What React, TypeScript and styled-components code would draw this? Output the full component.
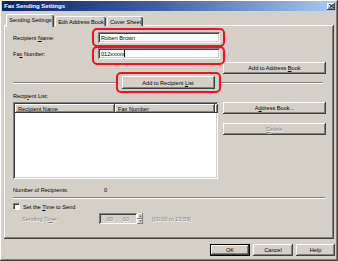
import React from "react";
import styled, { createGlobalStyle, css } from "styled-components";

const GlobalStyle = createGlobalStyle`
  html, body { margin: 0; padding: 0; background: #d4d0c8; }
  body {
    font-family: "Liberation Sans", Arial, sans-serif;
    font-size: 5.6px;
    color: #000;
  }
  * { box-sizing: border-box; }
`;

const raised = css`
  box-shadow: inset -1px -1px #404040, inset 1px 1px #fff,
    inset -2px -2px #808080, inset 2px 2px #d4d0c8;
`;

const sunken = css`
  box-shadow: inset 1px 1px #808080, inset -1px -1px #fff,
    inset 2px 2px #404040, inset -2px -2px #d4d0c8;
`;

const disabledText = css`
  color: #808080;
  text-shadow: 0.6px 0.6px #fff;
`;

const Window = styled.div`
  position: relative;
  width: 338px;
  height: 261px;
  padding: 1px 2px 2px;
  background: #d4d0c8;
  display: flex;
  flex-direction: column;
  ${raised}
`;

const TitleBar = styled.div`
  height: 10px;
  display: flex;
  align-items: center;
  justify-content: space-between;
  padding: 0 1px 0 2px;
  background: linear-gradient(to right, #0a246a 0%, #3a5fa0 45%, #a6caf0 100%);
  color: #fff;
  font-weight: bold;
  font-size: 6px;
`;

const CloseButton = styled.div`
  width: 8px;
  height: 7px;
  background: #d4d0c8;
  display: flex;
  align-items: center;
  justify-content: center;
  ${raised}
`;

const TabStrip = styled.div`
  display: flex;
  align-items: flex-end;
  height: 12px;
  margin-top: 3px;
  padding-left: 4px;
  position: relative;
  z-index: 1;
`;

const Tab = styled.div<{ $active?: boolean; $w: number }>`
  width: ${(p) => p.$w}px;
  height: ${(p) => (p.$active ? 13 : 10)}px;
  margin-bottom: ${(p) => (p.$active ? -1 : 0)}px;
  margin-right: 1px;
  display: flex;
  align-items: center;
  justify-content: center;
  padding-bottom: ${(p) => (p.$active ? 2 : 0)}px;
  background: #d4d0c8;
  border-top: 1px solid #fff;
  border-left: 1px solid #fff;
  border-radius: 2px 2px 0 0;
  box-shadow: inset -1px 0 #404040, inset -2px 0 #808080;
  white-space: nowrap;
`;

const Panel = styled.div`
  height: 214px;
  margin: -1px 2px 0;
  padding: 7px 8px 0 9px;
  display: flex;
  flex-direction: column;
  background: #d4d0c8;
  ${raised}
`;

const FieldRow = styled.div<{ $gap?: number }>`
  display: flex;
  align-items: center;
  height: 11px;
  margin-top: ${(p) => p.$gap ?? 0}px;
`;

const FieldLabel = styled.span<{ $w: number; $disabled?: boolean }>`
  width: ${(p) => p.$w}px;
  white-space: nowrap;
  ${(p) => p.$disabled && disabledText}
`;

const TextBox = styled.div`
  width: 122px;
  height: 11px;
  padding: 0 3px;
  display: flex;
  align-items: center;
  background: #fff;
  ${sunken}
`;

const Caret = styled.span`
  width: 1px;
  height: 7px;
  background: #000;
`;

const Button = styled.div<{ $w: number; $h?: number; $disabled?: boolean; $default?: boolean }>`
  width: ${(p) => p.$w}px;
  height: ${(p) => p.$h ?? 12}px;
  flex: none;
  display: flex;
  align-items: center;
  justify-content: center;
  background: #d4d0c8;
  white-space: nowrap;
  ${(p) =>
    p.$default
      ? css`
          border: 1px solid #000;
          box-shadow: inset -1px -1px #404040, inset 1px 1px #fff, inset -2px -2px #808080;
        `
      : raised}
  ${(p) => p.$disabled && disabledText}
`;

const RightRow = styled.div<{ $gap: number }>`
  display: flex;
  justify-content: flex-end;
  margin-top: ${(p) => p.$gap}px;
`;

const DividerRow = styled.div`
  display: flex;
  align-items: center;
  gap: 5px;
  height: 13px;
  margin-top: 2px;
`;

const etched = css`
  height: 2px;
  border-top: 1px solid #808080;
  border-bottom: 1px solid #fff;
`;

const DividerLine = styled.div<{ $right?: number }>`
  flex: 1;
  margin-right: ${(p) => p.$right ?? 0}px;
  ${etched}
`;

const Separator = styled.div`
  flex: none;
  margin: 3px 1px 0 0;
  ${etched}
`;

const Plain = styled.div<{ $gap: number }>`
  height: 6px;
  line-height: 6px;
  margin-top: ${(p) => p.$gap}px;
  white-space: nowrap;
`;

const ListArea = styled.div`
  display: flex;
  gap: 5px;
  margin-top: 3px;
`;

const ListBox = styled.div`
  width: 205px;
  height: 77px;
  padding: 2px;
  background: #fff;
  ${sunken}
`;

const ListHeader = styled.div`
  display: flex;
  height: 9px;
`;

const HeaderCell = styled.div<{ $w?: number }>`
  width: ${(p) => (p.$w ? `${p.$w}px` : "auto")};
  flex: ${(p) => (p.$w ? "none" : 1)};
  padding-left: 3px;
  display: flex;
  align-items: center;
  background: #d4d0c8;
  white-space: nowrap;
  box-shadow: inset -1px -1px #404040, inset 1px 1px #fff, inset -2px -2px #808080;
`;

const SideColumn = styled.div`
  display: flex;
  flex-direction: column;
  gap: 9px;
`;

const CountRow = styled.div`
  display: flex;
  height: 7px;
  line-height: 7px;
  margin-top: 8px;
`;

const CheckRow = styled.div`
  display: flex;
  align-items: center;
  gap: 3px;
  height: 7px;
  margin-top: 4px;
`;

const CheckBox = styled.div`
  width: 7px;
  height: 7px;
  background: #fff;
  border: 1px solid #808080;
  border-right-color: #fff;
  border-bottom-color: #fff;
  box-shadow: inset 1px 1px #404040;
`;

const TimeRow = styled.div`
  display: flex;
  align-items: center;
  height: 11px;
  margin-top: 3px;
  padding-left: 9px;
`;

const TimeBox = styled.div`
  width: 38px;
  height: 11px;
  display: flex;
  align-items: center;
  justify-content: center;
  gap: 4px;
  background: #d4d0c8;
  ${sunken}
  ${disabledText}
`;

const Spinner = styled.div`
  width: 6px;
  height: 11px;
  display: flex;
  flex-direction: column;
`;

const SpinHalf = styled.div`
  flex: 1;
  display: flex;
  align-items: center;
  justify-content: center;
  background: #d4d0c8;
  box-shadow: inset -1px -1px #808080, inset 1px 1px #fff;
`;

const RangeText = styled.span`
  margin-left: 9px;
  white-space: nowrap;
  ${disabledText}
`;

const Footer = styled.div`
  display: flex;
  justify-content: flex-end;
  gap: 3px;
  margin-top: 5px;
  padding-right: 1px;
`;

// red annotation boxes drawn over the dialog
const Highlight = styled.div<{ $x: number; $y: number; $w: number; $h: number }>`
  position: absolute;
  left: ${(p) => p.$x}px;
  top: ${(p) => p.$y}px;
  width: ${(p) => p.$w}px;
  height: ${(p) => p.$h}px;
  border: 2px solid #f4101a;
  border-radius: 5px;
  pointer-events: none;
`;

const Arrow = ({ up }: { up?: boolean }) => (
  <svg width="3" height="2" viewBox="0 0 3 2">
    <path d={up ? "M0 2 L1.5 0 L3 2Z" : "M0 0 L1.5 2 L3 0Z"} fill="#808080" />
  </svg>
);

export default function App() {
  return (
    <>
      <GlobalStyle />
      <Window>
        <TitleBar>
          <span>Fax Sending Settings</span>
          <CloseButton>
            <svg width="5" height="4" viewBox="0 0 5 4">
              <path d="M0.5 0 L4.5 4 M4.5 0 L0.5 4" stroke="#000" strokeWidth="1" />
            </svg>
          </CloseButton>
        </TitleBar>

        <TabStrip>
          <Tab $active $w={48}>Sending Settings</Tab>
          <Tab $w={51}>Edit Address Book</Tab>
          <Tab $w={36}>Cover Sheet</Tab>
        </TabStrip>

        <Panel>
          <FieldRow>
            <FieldLabel $w={85}>
              Recipient <u>N</u>ame:
            </FieldLabel>
            <TextBox>Robert Brown</TextBox>
          </FieldRow>
          <FieldRow $gap={5}>
            <FieldLabel $w={85}>
              Fa<u>x</u> Number:
            </FieldLabel>
            <TextBox>
              012xxxxx
              <Caret />
            </TextBox>
          </FieldRow>

          <RightRow $gap={3}>
            <Button $w={103}>
              Add to Address&nbsp;<u>B</u>ook
            </Button>
          </RightRow>

          <DividerRow>
            <DividerLine />
            <Button $w={93} $h={13}>
              Add to Recipient&nbsp;<u>L</u>ist
            </Button>
            <DividerLine $right={3} />
          </DividerRow>

          <Plain $gap={4}>
            Recip<u>i</u>ent List:
          </Plain>

          <ListArea>
            <ListBox>
              <ListHeader>
                <HeaderCell $w={100}>Recipient Name</HeaderCell>
                <HeaderCell $w={100}>Fax Number</HeaderCell>
                <HeaderCell />
              </ListHeader>
            </ListBox>
            <SideColumn>
              <Button $w={103}>
                A<u>d</u>dress Book...
              </Button>
              <Button $w={103} $disabled>
                <u>D</u>elete
              </Button>
            </SideColumn>
          </ListArea>

          <CountRow>
            <FieldLabel $w={91}>Number of Recipients:</FieldLabel>
            <span>0</span>
          </CountRow>

          <Separator />

          <CheckRow>
            <CheckBox />
            <span>
              Set the <u>T</u>ime to Send
            </span>
          </CheckRow>

          <TimeRow>
            <FieldLabel $w={77} $disabled>
              Sending Ti<u>m</u>e:
            </FieldLabel>
            <TimeBox>
              <span>00</span>
              <span>:</span>
              <span>00</span>
            </TimeBox>
            <Spinner>
              <SpinHalf>
                <Arrow up />
              </SpinHalf>
              <SpinHalf>
                <Arrow />
              </SpinHalf>
            </Spinner>
            <RangeText>[00:00 to 23:59]</RangeText>
          </TimeRow>
        </Panel>

        <Footer>
          <Button $w={40} $default>
            OK
          </Button>
          <Button $w={40}>Cancel</Button>
          <Button $w={39}>Help</Button>
        </Footer>

        <Highlight $x={92} $y={28} $w={133} $h={19} />
        <Highlight $x={92} $y={46} $w={133} $h={19} />
        <Highlight $x={116} $y={72} $w={105} $h={21} />
      </Window>
    </>
  );
}
